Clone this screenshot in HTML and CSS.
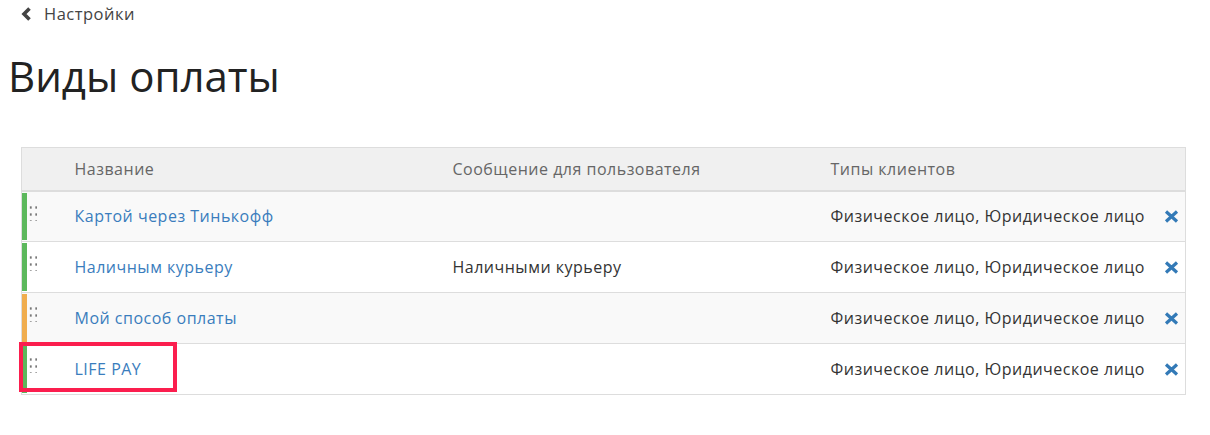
FILE: index.html
```html
<!DOCTYPE html>
<html lang="ru">
<head>
<meta charset="utf-8">
<title>Виды оплаты</title>
<link rel="stylesheet" href="styles.css">
</head>
<body>
<div class="page">
  <a class="back" href="#">
    <svg class="back-icon" width="12" height="14" viewBox="0 0 12 14"><path d="M9.5 1.5 L4 7 L9.5 12.5" fill="none" stroke="#444" stroke-width="3.6" stroke-linejoin="miter"/></svg>
    <span>Настройки</span>
  </a>
  <h1 class="title">Виды оплаты</h1>
  <div class="table-wrap">
    <table class="pay-table">
      <colgroup>
        <col class="c-handle"><col class="c-name"><col class="c-msg"><col class="c-types"><col class="c-del">
      </colgroup>
      <thead>
        <tr>
          <th></th>
          <th>Название</th>
          <th>Сообщение для пользователя</th>
          <th>Типы клиентов</th>
          <th></th>
        </tr>
      </thead>
      <tbody>
        <tr class="odd">
          <td class="handle green"><span class="dots"></span></td>
          <td><a href="#">Картой через Тинькофф</a></td>
          <td></td>
          <td>Физическое лицо, Юридическое лицо</td>
          <td class="del"><svg width="15" height="13" viewBox="0 0 15 13"><path d="M2 1.5 L13 11.5 M13 1.5 L2 11.5" stroke="#337ab7" stroke-width="3.2"/></svg></td>
        </tr>
        <tr>
          <td class="handle green"><span class="dots"></span></td>
          <td><a href="#">Наличным курьеру</a></td>
          <td>Наличными курьеру</td>
          <td>Физическое лицо, Юридическое лицо</td>
          <td class="del"><svg width="15" height="13" viewBox="0 0 15 13"><path d="M2 1.5 L13 11.5 M13 1.5 L2 11.5" stroke="#337ab7" stroke-width="3.2"/></svg></td>
        </tr>
        <tr class="odd">
          <td class="handle orange"><span class="dots"></span></td>
          <td><a href="#">Мой способ оплаты</a></td>
          <td></td>
          <td>Физическое лицо, Юридическое лицо</td>
          <td class="del"><svg width="15" height="13" viewBox="0 0 15 13"><path d="M2 1.5 L13 11.5 M13 1.5 L2 11.5" stroke="#337ab7" stroke-width="3.2"/></svg></td>
        </tr>
        <tr>
          <td class="handle green"><span class="dots"></span><span class="highlight"></span></td>
          <td><a href="#">LIFE PAY</a></td>
          <td></td>
          <td>Физическое лицо, Юридическое лицо</td>
          <td class="del"><svg width="15" height="13" viewBox="0 0 15 13"><path d="M2 1.5 L13 11.5 M13 1.5 L2 11.5" stroke="#337ab7" stroke-width="3.2"/></svg></td>
        </tr>
      </tbody>
    </table>
  </div>
</div>
</body>
</html>
```

FILE: styles.css
```css
* { box-sizing: border-box; }
html, body { margin: 0; padding: 0; background: #fff; }
body {
  font-family: "Open Sans", "Noto Sans", sans-serif;
  color: #333;
  font-size: 16px;
  letter-spacing: 0.5px;
}
.page { width: 1210px; }
.back {
  display: flex;
  align-items: center;
  gap: 12px;
  height: 27px;
  padding-left: 20px;
  color: #444;
  text-decoration: none;
  font-size: 16.5px;
}
.back-icon { display: block; }
.title {
  margin: 21px 0 0 8px;
  font-size: 42px;
  font-weight: 400;
  line-height: 56px;
  letter-spacing: 0;
  color: #222;
}
.table-wrap { padding: 43px 25px 0 21px; }
.pay-table {
  width: 1164px;
  border-collapse: collapse;
  table-layout: fixed;
  border: 1px solid #ddd;
}
.c-handle { width: 45px; }
.c-name { width: 378px; }
.c-msg { width: 378px; }
.c-types { width: 333px; }
.c-del { width: 30px; }
.pay-table th {
  background: #f0f0f0;
  height: 43px;
  text-align: left;
  font-weight: 400;
  color: #666;
  padding: 0 8px;
  border-bottom: 2px solid #ddd;
}
.pay-table td {
  height: 51px;
  padding: 0 8px;
  border-bottom: 1px solid #ddd;
  white-space: nowrap;
}
.pay-table tr.odd td { background: #f9f9f9; }
.pay-table a { color: #3a7dbd; text-decoration: none; }
.pay-table td.handle {
  position: relative;
  padding: 0;
}
.handle::before {
  content: "";
  position: absolute;
  left: 0;
  top: 1px;
  bottom: 1px;
  width: 5px;
}
.handle.green::before { background: #5cb85c; }
.handle.orange::before { background: #f0ad4e; }
.dots {
  position: absolute;
  left: 6px;
  top: 12px;
  width: 9px;
  height: 17px;
  background-image: radial-gradient(circle, #777 1px, transparent 1.3px);
  background-size: 5.5px 7px;
  background-position: 0 0;
}
.pay-table td.del { padding: 0 0 0 8px; text-align: left; }
.del svg { display: block; }
.highlight {
  position: absolute;
  left: -3px;
  top: -2px;
  width: 158px;
  height: 50px;
  border: 4px solid #fb1e4e;
  z-index: 2;
}
```
